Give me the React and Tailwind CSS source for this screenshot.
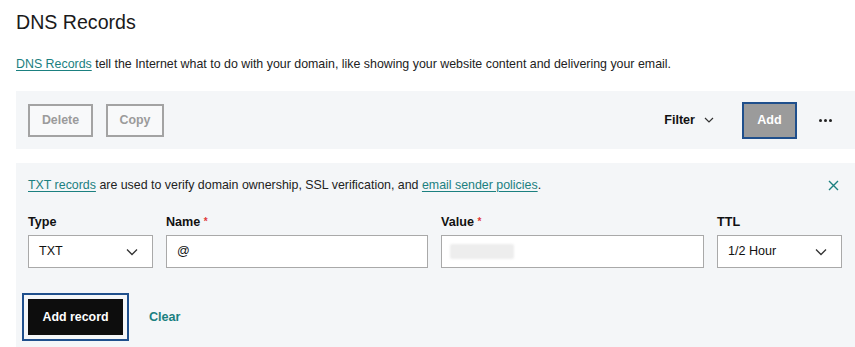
import React from "react";

const Chevron = ({ className = "" }) => (
  <svg className={className} width="12" height="8" viewBox="0 0 12 8" fill="none">
    <path d="M1 1.5 L6 6.5 L11 1.5" stroke="#333" strokeWidth="1.3" />
  </svg>
);

export default function App() {
  return (
    <div className="w-[855px] h-[347px] overflow-hidden bg-white text-[#111] font-['Liberation_Sans',Arial,sans-serif]">
      <h1 className="ml-4 mt-[10px] text-[19.6px] leading-[25px] font-normal text-[#1a1a1a]">DNS Records</h1>
      <p className="ml-4 mt-[20px] text-[12.4px] leading-[18px] text-[#222]">
        <a className="text-[#1b8080] underline underline-offset-2">DNS Records</a> tell the Internet what to do with your domain, like showing your website content and delivering your email.
      </p>

      <div className="ml-4 mt-[18px] h-[58px] bg-[#f4f6f8] flex items-center pl-3 pr-[15px]">
        <button className="h-[33px] w-[65px] border-2 border-[#a3a3a3] bg-[#f8f9fa] text-[12.4px] font-bold text-[#9b9b9b]">Delete</button>
        <button className="ml-[13px] h-[33px] w-[58px] border-2 border-[#a3a3a3] bg-[#f8f9fa] text-[12.4px] font-bold text-[#9b9b9b]">Copy</button>
        <div className="flex-1" />
        <div className="flex items-center gap-[9px] text-[12.6px] font-bold text-[#111]">
          Filter
          <svg width="10" height="6" viewBox="0 0 10 6" fill="none"><path d="M1 1 L5 5 L9 1" stroke="#333" strokeWidth="1.2" /></svg>
        </div>
        <button className="ml-[28px] h-[37px] w-[55px] border-2 border-[#1f4f8c] bg-[#9b9b9b] text-[12.6px] font-bold text-white">Add</button>
        <button className="ml-[13px] w-[30px] h-[20px] flex items-center justify-center gap-[2px]">
          <span className="w-[3px] h-[3px] rounded-full bg-[#222]" />
          <span className="w-[3px] h-[3px] rounded-full bg-[#222]" />
          <span className="w-[3px] h-[3px] rounded-full bg-[#222]" />
        </button>
      </div>

      <div className="ml-4 mt-[14px] h-[184px] bg-[#f4f6f8] pl-3 pr-[13px] pt-[13px]">
        <div className="flex items-center text-[12.4px] leading-[18px] text-[#222]">
          <p>
            <a className="text-[#1b8080] underline underline-offset-2">TXT records</a> are used to verify domain ownership, SSL verification, and <a className="text-[#1b8080] underline underline-offset-2">email sender policies</a>.
          </p>
          <div className="flex-1" />
          <svg className="mr-[3px]" width="11" height="11" viewBox="0 0 11 11" fill="none">
            <path d="M1 1 L10 10 M10 1 L1 10" stroke="#1b8080" strokeWidth="1.4" />
          </svg>
        </div>

        <div className="mt-[19px] flex gap-[13px]">
          <div className="w-[125px]">
            <div className="text-[12.6px] leading-[18px] font-bold">Type</div>
            <div className="mt-[4px] h-[33px] border border-[#a9a9a9] bg-white flex items-center justify-between pl-[10px] pr-[14px] text-[12.6px]">
              TXT
              <Chevron />
            </div>
          </div>
          <div className="w-[262px]">
            <div className="text-[12.6px] leading-[18px] font-bold">Name <span className="text-[#e03a3a] text-[10px] align-top">*</span></div>
            <div className="mt-[4px] h-[33px] border border-[#a9a9a9] bg-white flex items-center pl-[10px] text-[12.6px]">@</div>
          </div>
          <div className="w-[263px]">
            <div className="text-[12.6px] leading-[18px] font-bold">Value <span className="text-[#e03a3a] text-[10px] align-top">*</span></div>
            <div className="mt-[4px] h-[33px] border border-[#a9a9a9] bg-white flex items-center pl-[8px]">
              <div className="w-[64px] h-[15px] bg-[#ededed] rounded-[2px] blur-[1px]" />
            </div>
          </div>
          <div className="w-[125px]">
            <div className="text-[12.6px] leading-[18px] font-bold">TTL</div>
            <div className="mt-[4px] h-[33px] border border-[#a9a9a9] bg-white flex items-center justify-between pl-[10px] pr-[14px] text-[12.6px]">
              1/2 Hour
              <Chevron />
            </div>
          </div>
        </div>

        <div className="mt-[31px] flex items-center">
          <button className="h-[36px] w-[95px] bg-[#0d0d0d] text-white text-[12.4px] font-bold outline-2 outline-offset-[4px] outline-[#1f4f8c] outline-solid">Add record</button>
          <button className="ml-[26px] text-[12.6px] font-bold text-[#1b8080]">Clear</button>
        </div>
      </div>
    </div>
  );
}
